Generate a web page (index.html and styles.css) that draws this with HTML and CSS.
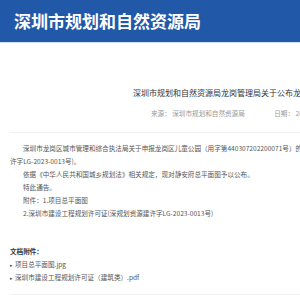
FILE: index.html
```html
<!DOCTYPE html>
<html lang="zh-CN">
<head>
  <meta charset="UTF-8" />
  <meta name="viewport" content="width=device-width, initial-scale=1.0"/>
  <title>深圳市规划和自然资源局</title>
  <link rel="stylesheet" href="styles.css">
</head>
<body>

  <div class="top">
    <h1>深圳市规划和自然资源局</h1>
  </div>

  <div class="main">
    <h2 class="art-title">深圳市规划和自然资源局龙岗管理局关于公布龙岗区儿童公园总平面图的公告</h2>
    <div class="meta">
      <span>来源： 深圳市规划和自然资源局</span>
      <span class="date">日期： 2023-03-20</span>
    </div>

    <div class="art-body">
      <p class="ind">深圳市龙岗区城市管理和综合执法局关于申报龙岗区儿童公园（用字第440307202200071号）的建设工程规划许可证（深规划资源建</p>
      <p>许字LG-2023-0013号)。</p>
      <p class="ind">依据《中华人民共和国城乡规划法》相关规定，现对静安府总平面图予以公布。</p>
      <p class="ind">特此通告。</p>
      <p class="ind">附件：1.项目总平面图</p>
      <p class="ind">2.深圳市建设工程规划许可证(深规划资源建许字LG-2023-0013号)</p>
    </div>

    <div class="files">
      <div class="files-head">文档附件：</div>
      <ul>
        <li>项目总平面图.jpg</li>
        <li>深圳市建设工程规划许可证（建筑类）.pdf</li>
      </ul>
    </div>
  </div>

</body>
</html>
```

FILE: styles.css
```css
body {
  margin: 0;
  background-color: #fff;
  font-family: "Noto Sans CJK SC", "Liberation Sans", sans-serif;
  overflow: hidden;
}

.top {
  height: 42px;
  background-color: #2159a8;
  border-bottom: 1px solid #d3deee;
  padding-left: 14px;
}

.top h1 {
  margin: 0;
  color: #fff;
  font-size: 17px;
  line-height: 41px;
  font-weight: bold;
  white-space: nowrap;
}

.main {
  padding-left: 10px;
  white-space: nowrap;
}

.art-title {
  margin: 44px 0 0 123px;
  font-size: 8px;
  line-height: 12px;
  font-weight: normal;
  color: #333;
}

.meta {
  margin: 8px 0 0 141px;
  font-size: 6.6px;
  line-height: 12px;
  color: #999;
}

.meta .date {
  margin-left: 28px;
}

.art-body {
  border-top: 1px solid #eef0f2;
  margin-top: 13px;
  padding-top: 9px;
  font-size: 6.6px;
  line-height: 13px;
  color: #555;
}

.art-body p {
  margin: 0;
}

.art-body .ind {
  text-indent: 13px;
}

.files {
  margin-top: 25px;
  padding-bottom: 10px;
  border-bottom: 1px solid #eef0f2;
  font-size: 6.6px;
  line-height: 13px;
  color: #555;
}

.files-head {
  color: #333;
  font-weight: bold;
}

.files ul {
  list-style: none;
  margin: 0;
  padding: 0;
}

.files li::before {
  content: "▸";
  font-size: 5px;
  margin-right: 2px;
  color: #555;
}
```
